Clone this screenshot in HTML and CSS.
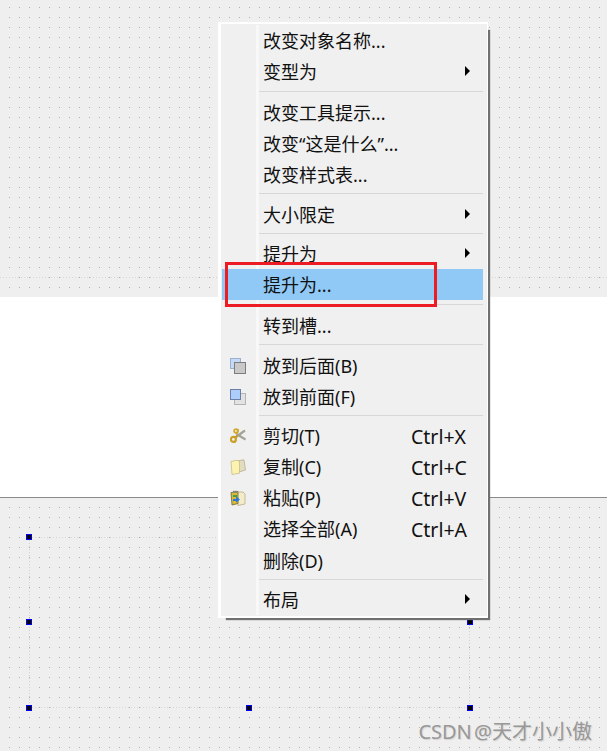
FILE: index.html
```html
<!DOCTYPE html>
<html lang="zh-CN">
<head>
<meta charset="utf-8">
<title>Qt Designer 右键菜单</title>
<link rel="stylesheet" href="styles.css">
</head>
<body>
<main class="canvas">
  <div class="band"></div>
  <div class="guide guide-h guide-top"></div>
  <div class="guide guide-h guide-form-top"></div>
  <div class="guide guide-h guide-form-bottom"></div>
  <div class="guide guide-v guide-form-left"></div>
  <div class="guide guide-v guide-form-right"></div>
  <span class="handle h1"></span><span class="handle h2"></span><span class="handle h3"></span>
  <span class="handle h4"></span><span class="handle h5"></span><span class="handle h6"></span>

  <nav class="menu">
    <div class="item"><span class="icon"></span><span class="label">改变对象名称...</span></div>
    <div class="item sub"><span class="icon"></span><span class="label">变型为</span><span class="arrow"></span></div>
    <div class="sep sep-a"></div>
    <div class="item"><span class="icon"></span><span class="label">改变工具提示...</span></div>
    <div class="item"><span class="icon"></span><span class="label">改变“这是什么”...</span></div>
    <div class="item"><span class="icon"></span><span class="label">改变样式表...</span></div>
    <div class="sep sep-b"></div>
    <div class="item sub"><span class="icon"></span><span class="label">大小限定</span><span class="arrow"></span></div>
    <div class="sep sep-c"></div>
    <div class="item sub"><span class="icon"></span><span class="label">提升为</span><span class="arrow"></span></div>
    <div class="item active"><span class="icon"></span><span class="label">提升为...</span></div>
    <div class="sep sep-a"></div>
    <div class="item"><span class="icon"></span><span class="label">转到槽...</span></div>
    <div class="sep sep-b"></div>
    <div class="item"><span class="icon">
      <svg viewBox="0 0 16 16" width="16" height="16"><rect x="0.5" y="0.5" width="10" height="10" fill="#c4d8f8" stroke="#9fb0cc"/><rect x="4.5" y="4.5" width="11" height="11" fill="#c9c9c9" stroke="#7d7d7d"/></svg>
    </span><span class="label">放到后面(B)</span></div>
    <div class="item"><span class="icon">
      <svg viewBox="0 0 16 16" width="16" height="16"><rect x="4.5" y="4.5" width="11" height="11" fill="#e2e2e2" stroke="#b4b4b4"/><rect x="0.5" y="0.5" width="10" height="10" fill="#acccfb" stroke="#6d7fa6"/></svg>
    </span><span class="label">放到前面(F)</span></div>
    <div class="sep sep-c"></div>
    <div class="item"><span class="icon">
      <svg viewBox="0 0 16 16" width="16" height="16"><path d="M15 2.5 6 9M15.5 11.5 6.5 6" fill="none" stroke="#a3a398" stroke-width="2.2"/><path d="M8.5 1.5 6.5 6" fill="none" stroke="#cfa72d" stroke-width="1.8"/><circle cx="6" cy="3" r="1.9" fill="none" stroke="#cfa72d" stroke-width="1.8"/><circle cx="3.4" cy="11.4" r="2.5" fill="none" stroke="#c99f25" stroke-width="2.2"/><path d="M5 9.5 7.5 7.5" stroke="#c99f25" stroke-width="2"/></svg>
    </span><span class="label">剪切(T)</span><span class="key">Ctrl+X</span></div>
    <div class="item"><span class="icon">
      <svg viewBox="0 0 16 16" width="16" height="16"><path d="M7 2 14 .8 15.5 11 9 13Z" fill="#e2dcc0" stroke="#b8b08a" stroke-width=".8"/><path d="M1 2.5 7 1.2 9.5 2.5V14.2L2 15.5Z" fill="#fcf3b0" stroke="#c9bb8a" stroke-width=".8"/></svg>
    </span><span class="label">复制(C)</span><span class="key">Ctrl+C</span></div>
    <div class="item"><span class="icon">
      <svg viewBox="0 0 16 16" width="16" height="16"><path d="M7 2h6l2 2v10l-7 1.5Z" fill="#f4ebca" stroke="#b9ad86" stroke-width=".8"/><path d="M1 2.5 8 1.5V13.5L2 15Z" fill="#d9b93a" stroke="#6f6330" stroke-width=".8"/><rect x="3" y=".8" width="4" height="2.2" fill="#8a8a78"/><path d="M3 9h3V6.5l4 3-4 3V11H3Z" fill="#2a78d8"/><rect x="3" y="5" width="4" height="2" fill="#3ba24a"/></svg>
    </span><span class="label">粘贴(P)</span><span class="key">Ctrl+V</span></div>
    <div class="item"><span class="icon"></span><span class="label">选择全部(A)</span><span class="key">Ctrl+A</span></div>
    <div class="item item-delete"><span class="icon"></span><span class="label">删除(D)</span></div>
    <div class="sep sep-c"></div>
    <div class="item sub"><span class="icon"></span><span class="label">布局</span><span class="arrow"></span></div>
  </nav>

  <div class="callout"></div>
  <div class="watermark">CSDN @天才小小傲</div>
</main>
</body>
</html>
```

FILE: styles.css
```css
* { box-sizing: border-box; }
html, body { margin: 0; padding: 0; }
body { width: 607px; height: 751px; overflow: hidden; font-family: "Noto Sans", "Noto Sans CJK SC", sans-serif; }

.canvas {
  position: relative;
  width: 607px;
  height: 751px;
  padding-top: 297px;
  background-color: #efefef;
  background-image: conic-gradient(from 270deg at 1px 1px, #b0b0b0 25%, transparent 0);
  background-size: 10px 10px;
  background-position: 9px 7px;
}
.band { height: 201px; background: #fff; border-bottom: 1px solid #8a8a8a; }

.guide { position: absolute; }
.guide-h { height: 1px; background: repeating-linear-gradient(90deg, #d6d6d6 0 1px, transparent 1px 3px); }
.guide-v { width: 1px; background: repeating-linear-gradient(180deg, #d2d2d2 0 1px, transparent 1px 3px); }
.guide-top { left: 0; right: 0; top: 277px; }
.guide-form-top { left: 29px; width: 200px; top: 537px; }
.guide-form-bottom { left: 29px; width: 440px; top: 707px; }
.guide-form-left { left: 29px; top: 537px; height: 170px; }
.guide-form-right { left: 469px; top: 622px; height: 85px; }

.handle { position: absolute; width: 6px; height: 6px; margin: -3px 0 0 -3px; background: #000; border: 1px solid #0000f0; }
.h1 { left: 29px; top: 537px; }
.h2 { left: 29px; top: 622px; }
.h3 { left: 470px; top: 622px; }
.h4 { left: 29px; top: 708px; }
.h5 { left: 249px; top: 708px; }
.h6 { left: 470px; top: 708px; }

.menu {
  position: absolute;
  left: 218px;
  top: 22px;
  width: 270px;
  height: 596px;
  padding: 1px 4px 0 1px;
  background: #f0f0f0;
  border: 1px solid #fff;
  border-width: 2px 1px 2px 3px;
  box-shadow: 5px 5px 1px -3px #707070;
  display: flex;
  flex-direction: column;
}
.menu::before {
  content: "";
  position: absolute;
  left: 35px;
  top: 1px;
  bottom: 1px;
  width: 3px;
  background: #f8f8f8;
}
.item { position: relative; display: flex; align-items: center; height: 31px; flex: none; font-size: 18px; line-height: 31px; color: #111; }
.item-delete { margin-top: 1px; }
.item.active { background: #90c8f6; }
.icon { width: 40px; flex: none; display: flex; align-items: center; justify-content: flex-start; padding-left: 8px; }
.label { flex: 1; white-space: nowrap; padding: 1px 0 0 1px; }
.key { width: 72px; flex: none; font-size: 19.5px; padding-top: 1px; }
.arrow { width: 0; height: 0; margin: 0 13px 2px 0; border-left: 5px solid #000; border-top: 5px solid transparent; border-bottom: 5px solid transparent; }
.sep { flex: none; margin-left: 37px; position: relative; }
.sep::after { content: ""; position: absolute; left: 0; right: 0; top: 3px; height: 1px; background: #d7d7d7; }
.sep-a { height: 10px; }
.sep-a::after { top: 4px; }
.sep-b { height: 9px; }
.sep-c { height: 8px; }

.callout { position: absolute; left: 225px; top: 262px; width: 212px; height: 45px; border: 3px solid #ed1c24; }
.watermark { position: absolute; right: 15px; top: 718px; font-size: 20px; line-height: 28px; word-spacing: -3px; color: #989898; text-shadow: 1px 1px 1px #d4d4d4; white-space: nowrap; }
```
